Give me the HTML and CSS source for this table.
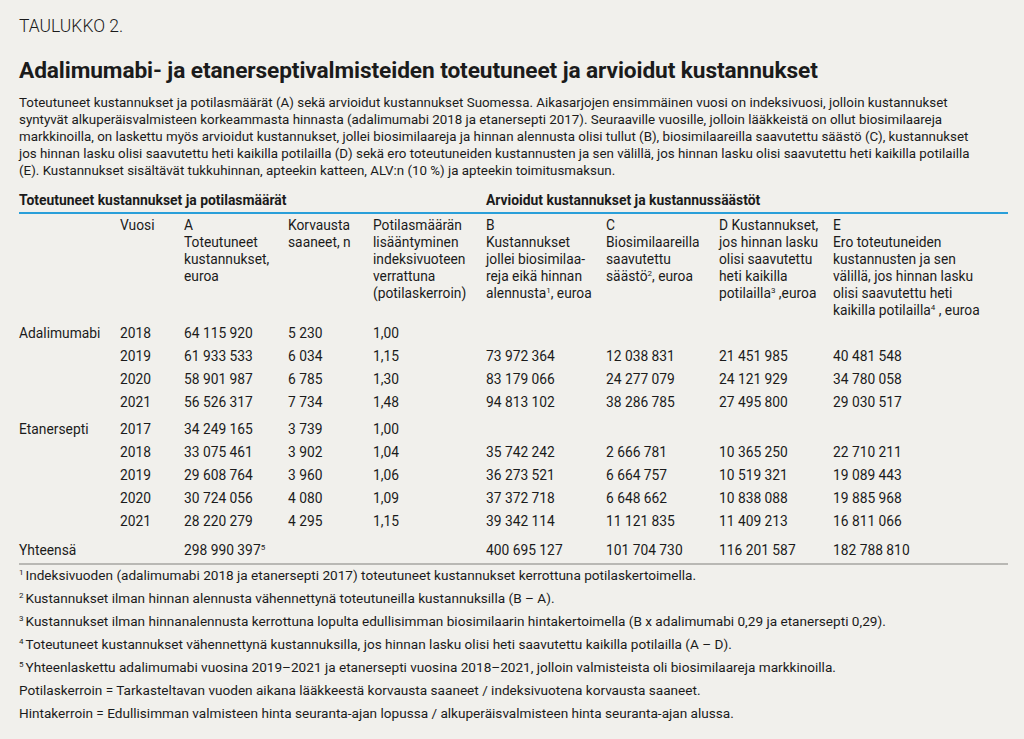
FILE: index.html
```html
<!DOCTYPE html>
<html lang="fi">
<head>
<meta charset="utf-8">
<link rel="stylesheet" href="styles.css">
</head>
<body>
<div class="page">
  <div class="label">TAULUKKO 2.</div>
  <h1 class="title">Adalimumabi- ja etanerseptivalmisteiden toteutuneet ja arvioidut kustannukset</h1>
  <p class="intro">Toteutuneet kustannukset ja potilasmäärät (A) sekä arvioidut kustannukset Suomessa. Aikasarjojen ensimmäinen vuosi on indeksivuosi, jolloin kustannukset<br>syntyvät alkuperäisvalmisteen korkeammasta hinnasta (adalimumabi 2018 ja etanersepti 2017). Seuraaville vuosille, jolloin lääkkeistä on ollut biosimilaareja<br>markkinoilla, on laskettu myös arvioidut kustannukset, jollei biosimilaareja ja hinnan alennusta olisi tullut (B), biosimilaareilla saavutettu säästö (C), kustannukset<br>jos hinnan lasku olisi saavutettu heti kaikilla potilailla (D) sekä ero toteutuneiden kustannusten ja sen välillä, jos hinnan lasku olisi saavutettu heti kaikilla potilailla<br>(E). Kustannukset sisältävät tukkuhinnan, apteekin katteen, ALV:n (10 %) ja apteekin toimitusmaksun.</p>

  <div class="table">
    <div class="sec sec1">Toteutuneet kustannukset ja potilasmäärät</div>
    <div class="sec sec2">Arvioidut kustannukset ja kustannussäästöt</div>

    <div class="hrow">
      <div></div>
      <div>Vuosi</div>
      <div>A<br>Toteutuneet<br>kustannukset,<br>euroa</div>
      <div>Korvausta<br>saaneet, n</div>
      <div>Potilasmäärän<br>lisääntyminen<br>indeksivuoteen<br>verrattuna<br>(potilaskerroin)</div>
      <div>B<br>Kustannukset<br>jollei biosimilaa-<br>reja eikä hinnan<br>alennusta<sup>1</sup>, euroa</div>
      <div>C<br>Biosimilaareilla<br>saavutettu<br>säästö<sup>2</sup>, euroa</div>
      <div>D Kustannukset,<br>jos hinnan lasku<br>olisi saavutettu<br>heti kaikilla<br>potilailla<sup>3</sup> ,euroa</div>
      <div>E<br>Ero toteutuneiden<br>kustannusten ja sen<br>välillä, jos hinnan lasku<br>olisi saavutettu heti<br>kaikilla potilailla<sup>4</sup> , euroa</div>
    </div>

    <div class="group">
      <div class="row"><div>Adalimumabi</div><div>2018</div><div>64 115 920</div><div>5 230</div><div>1,00</div><div></div><div></div><div></div><div></div></div>
      <div class="row"><div></div><div>2019</div><div>61 933 533</div><div>6 034</div><div>1,15</div><div>73 972 364</div><div>12 038 831</div><div>21 451 985</div><div>40 481 548</div></div>
      <div class="row"><div></div><div>2020</div><div>58 901 987</div><div>6 785</div><div>1,30</div><div>83 179 066</div><div>24 277 079</div><div>24 121 929</div><div>34 780 058</div></div>
      <div class="row"><div></div><div>2021</div><div>56 526 317</div><div>7 734</div><div>1,48</div><div>94 813 102</div><div>38 286 785</div><div>27 495 800</div><div>29 030 517</div></div>
    </div>

    <div class="group">
      <div class="row"><div>Etanersepti</div><div>2017</div><div>34 249 165</div><div>3 739</div><div>1,00</div><div></div><div></div><div></div><div></div></div>
      <div class="row"><div></div><div>2018</div><div>33 075 461</div><div>3 902</div><div>1,04</div><div>35 742 242</div><div>2 666 781</div><div>10 365 250</div><div>22 710 211</div></div>
      <div class="row"><div></div><div>2019</div><div>29 608 764</div><div>3 960</div><div>1,06</div><div>36 273 521</div><div>6 664 757</div><div>10 519 321</div><div>19 089 443</div></div>
      <div class="row"><div></div><div>2020</div><div>30 724 056</div><div>4 080</div><div>1,09</div><div>37 372 718</div><div>6 648 662</div><div>10 838 088</div><div>19 885 968</div></div>
      <div class="row"><div></div><div>2021</div><div>28 220 279</div><div>4 295</div><div>1,15</div><div>39 342 114</div><div>11 121 835</div><div>11 409 213</div><div>16 811 066</div></div>
    </div>

    <div class="row total"><div>Yhteensä</div><div></div><div>298 990 397<sup>5</sup></div><div></div><div></div><div>400 695 127</div><div>101 704 730</div><div>116 201 587</div><div>182 788 810</div></div>
  </div>

  <div class="notes">
    <div class="note"><sup>1</sup>Indeksivuoden (adalimumabi 2018 ja etanersepti 2017) toteutuneet kustannukset kerrottuna potilaskertoimella.</div>
    <div class="note"><sup>2</sup>Kustannukset ilman hinnan alennusta vähennettynä toteutuneilla kustannuksilla (B – A).</div>
    <div class="note"><sup>3</sup>Kustannukset ilman hinnanalennusta kerrottuna lopulta edullisimman biosimilaarin hintakertoimella (B x adalimumabi 0,29 ja etanersepti 0,29).</div>
    <div class="note"><sup>4</sup>Toteutuneet kustannukset vähennettynä kustannuksilla, jos hinnan lasku olisi heti saavutettu kaikilla potilailla (A – D).</div>
    <div class="note"><sup>5</sup>Yhteenlaskettu adalimumabi vuosina 2019–2021 ja etanersepti vuosina 2018–2021, jolloin valmisteista oli biosimilaareja markkinoilla.</div>
    <div class="note">Potilaskerroin = Tarkasteltavan vuoden aikana lääkkeestä korvausta saaneet / indeksivuotena korvausta saaneet.</div>
    <div class="note">Hintakerroin = Edullisimman valmisteen hinta seuranta-ajan lopussa / alkuperäisvalmisteen hinta seuranta-ajan alussa.</div>
  </div>
</div>
</body>
</html>
```

FILE: styles.css
```css
* { box-sizing: border-box; }
html, body { margin: 0; padding: 0; }
body {
  background: #f1f0ec;
  color: #1b1b1b;
  font-family: Roboto, "Noto Sans", "Liberation Sans", sans-serif;
  width: 1024px;
  height: 739px;
  overflow: hidden;
}
.page {
  padding: 15px 16px 0 19px;
}
.label {
  font-size: 17.5px;
  font-weight: 300;
  line-height: 22px;
}
.title {
  margin: 20px 0 0 0;
  font-size: 22.7px;
  font-weight: 700;
  line-height: 28px;
  letter-spacing: -0.1px;
}
.intro {
  margin: 9px 0 0 0;
  font-size: 13.35px;
  line-height: 17px;
  white-space: nowrap;
}
.table {
  margin-top: 12px;
  display: grid;
  grid-template-columns: 101px 64px 104px 85px 113px 120px 113px 114px 175px;
  font-size: 13.8px;
}
.sec {
  font-weight: 700;
  font-size: 13.9px;
  line-height: 18px;
  padding-bottom: 3px;
  border-bottom: 2px solid #2a9fd9;
}
.sec1 { grid-column: 1 / 6; }
.sec2 { grid-column: 6 / 10; }
.hrow, .group, .row {
  display: contents;
}
.hrow > div {
  line-height: 17px;
  padding-top: 3px;
  padding-bottom: 3px;
}
.row > div {
  line-height: 23px;
}
.group + .group .row:first-child > div { padding-top: 4px; }
.row.total > div {
  padding-top: 6px;
  padding-bottom: 1px;
  border-bottom: 2px solid #b9b8b4;
}
sup {
  font-size: 8px;
  line-height: 0;
  vertical-align: 5px;
}
.notes {
  margin-top: -1px;
  font-size: 13.6px;
}
.note {
  line-height: 23px;
  white-space: nowrap;
}
.note sup { margin-right: 2px; }
```
